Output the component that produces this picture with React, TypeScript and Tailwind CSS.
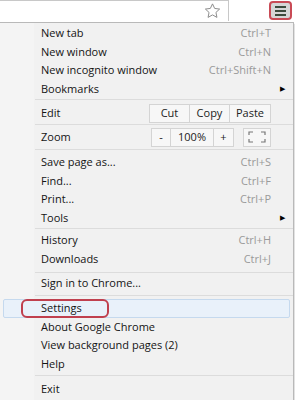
const font = { fontFamily: '"Open Sans", "Noto Sans", sans-serif' };

function Row({ label, shortcut, arrow }: { label: string; shortcut?: string; arrow?: boolean }) {
  return (
    <div className="flex h-[18.5px] items-center pl-[41px] pr-[22px]">
      <span className="flex-1 text-[11px] text-[#141414]">{label}</span>
      {shortcut && <span className="text-[11px] text-[#9a9a9a]">{shortcut}</span>}
      {arrow && <span className="-mr-[14px] text-[7px] text-black">▶</span>}
    </div>
  );
}

function Sep({ className = "" }: { className?: string }) {
  return <div className={`ml-[35px] h-px bg-[#dcdcdc] ${className}`} />;
}

function Btn({ children, className = "" }: { children: React.ReactNode; className?: string }) {
  return (
    <div className={`flex h-full items-center justify-center border border-[#d4d4d4] bg-[#f7f7f7] text-[11px] text-[#222] ${className}`}>
      {children}
    </div>
  );
}

export default function App() {
  return (
    <div className="h-[400px] w-[300px] overflow-hidden bg-white" style={font}>
      {/* toolbar */}
      <div className="flex h-[22px] items-start">
        <div className="relative flex h-[21px] w-[229px] items-center justify-end border-r border-t border-[#c8c8c8] bg-white pr-[6px]">
          <svg width="19" height="18" viewBox="0 0 24 24" fill="none" stroke="#8a8a8a" strokeWidth="1.3" strokeLinejoin="round">
            <path d="M12 2.5l2.9 6.1 6.6.8-4.9 4.5 1.3 6.6L12 17.2l-5.9 3.3 1.3-6.6-4.9-4.5 6.6-.8z" />
          </svg>
        </div>
        <div className="ml-[40px] mt-[1px] flex h-[19px] w-[23px] items-center justify-center rounded-[4px] border-2 border-[#c94a55] bg-[#d6d6d6]">
          <div className="flex flex-col gap-[2px]">
            <div className="h-[2px] w-[11px] bg-[#3c4a3c]" />
            <div className="h-[2px] w-[11px] bg-[#3c4a3c]" />
            <div className="h-[2px] w-[11px] bg-[#3c4a3c]" />
          </div>
        </div>
      </div>

      {/* menu */}
      <div className="relative w-[294px] border-r border-t border-[#b9b9b9] bg-[#f1f1f1] pt-[1px] shadow-[0_2px_1px_#555]">
        <div className="absolute bottom-0 left-0 top-0 w-[34px] bg-[#f4f4f4]" />
        <div className="relative flex flex-col">
          <Row label="New tab" shortcut="Ctrl+T" />
          <Row label="New window" shortcut="Ctrl+N" />
          <Row label="New incognito window" shortcut="Ctrl+Shift+N" />
          <Row label="Bookmarks" arrow />
          <Sep className="mt-[1px]" />

          <div className="mt-[3px] flex h-[20px] items-center pl-[41px] pr-[22px]">
            <span className="flex-1 text-[11px] text-[#141414]">Edit</span>
            <div className="flex h-[19px]">
              <Btn className="w-[41px]">Cut</Btn>
              <Btn className="-ml-px w-[41px]">Copy</Btn>
              <Btn className="-ml-px w-[42px]">Paste</Btn>
            </div>
          </div>
          <Sep className="mt-[1px]" />

          <div className="mt-[1px] flex h-[22px] items-center pl-[41px] pr-[22px]">
            <span className="flex-1 text-[11px] text-[#141414]">Zoom</span>
            <div className="flex h-[19px]">
              <Btn className="w-[20px]">-</Btn>
              <Btn className="-ml-px w-[44px]">100%</Btn>
              <Btn className="-ml-px w-[21px]">+</Btn>
              <Btn className="ml-[9px] w-[28px]">
                <svg width="18" height="12" viewBox="0 0 18 12" fill="none" stroke="#777" strokeWidth="1.2">
                  <path d="M1 4V1h4M13 1h4v3M17 8v3h-4M5 11H1V8" />
                </svg>
              </Btn>
            </div>
          </div>
          <Sep className="mt-[1px]" />

          <div className="mt-[3px]" />
          <Row label="Save page as..." shortcut="Ctrl+S" />
          <Row label="Find..." shortcut="Ctrl+F" />
          <Row label="Print..." shortcut="Ctrl+P" />
          <Row label="Tools" arrow />
          <Sep className="mt-[1px]" />

          <div className="mt-[2px]" />
          <Row label="History" shortcut="Ctrl+H" />
          <Row label="Downloads" shortcut="Ctrl+J" />
          <Sep className="mt-[4px]" />

          <div className="mt-[1px]" />
          <Row label="Sign in to Chrome..." />
          <Sep className="mt-[2px]" />

          <div className="mt-[3px]" />
          <div className="relative mx-[3px] flex h-[19px] items-center rounded-[2px] border border-[#c5d9ee] bg-[#e9f1fa] pl-[37px]">
            <span className="text-[11px] text-[#141414]">Settings</span>
            <div className="absolute left-[17px] top-[-1px] h-[19px] w-[88px] rounded-[6px] border-2 border-[#c0404e]" />
          </div>
          <Row label="About Google Chrome" />
          <Row label="View background pages (2)" />
          <Row label="Help" />
          <Sep className="mt-[2px]" />

          <div className="mt-[4px]" />
          <Row label="Exit" />
          <div className="h-[1px]" />
        </div>
      </div>
    </div>
  );
}
